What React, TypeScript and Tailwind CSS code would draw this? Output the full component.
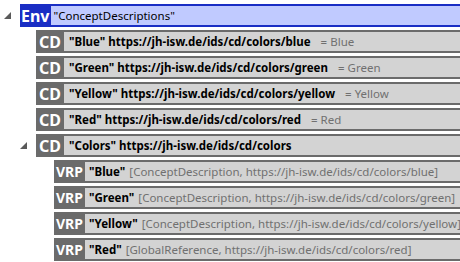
const font = { fontFamily: '"Noto Sans", "Open Sans", sans-serif' }

function Caret() {
  return (
    <svg width="7" height="7" viewBox="0 0 7 7" className="block">
      <polygon points="7,0 7,7 0,7" fill="#5a5a5a" />
    </svg>
  )
}

interface RowProps {
  indent: string
  badge: string
  kind: 'env' | 'cd' | 'vrp'
  caret?: boolean
  children: React.ReactNode
}

function Row({ indent, badge, kind, caret, children }: RowProps) {
  const isEnv = kind === 'env'
  let badgeCls = 'bg-[#6b6b6b] text-white font-bold text-[16px] leading-none px-[3px] flex items-center'
  if (kind === 'env') badgeCls = 'bg-[#1a2ec4] text-white font-bold text-[16px] leading-none px-[1px] flex items-center'
  if (kind === 'vrp') badgeCls = 'bg-[#6b6b6b] text-white font-bold text-[14px] leading-none px-[2px] flex items-center'
  return (
    <div className={`flex h-[23px] items-stretch ${indent}`}>
      <div className="w-[20px] flex items-center pl-[4px]">{caret && <Caret />}</div>
      <div className={badgeCls}>{badge}</div>
      <div
        className={
          isEnv
            ? 'flex-1 bg-[#c0caff] border-y-2 border-[#1a2ec4] flex items-center pl-[3px] whitespace-nowrap overflow-hidden text-[11.5px]'
            : kind === 'cd'
              ? 'flex-1 bg-[#d3d3d3] border-y-2 border-[#6b6b6b] flex items-center pl-[5px] whitespace-nowrap overflow-hidden text-[11.5px]'
              : 'flex-1 bg-[#d3d3d3] border-y-2 border-[#6b6b6b] flex items-center pl-[4px] whitespace-nowrap overflow-hidden text-[11.5px]'
        }
      >
        {children}
      </div>
    </div>
  )
}

const colors = ['Blue', 'Green', 'Yellow', 'Red']

export default function App() {
  return (
    <div className="w-[460px] h-[262px] bg-white overflow-hidden pt-[4px] flex flex-col gap-[3px]" style={font}>
      <Row indent="" badge="Env" kind="env" caret>
        <span className="text-black">"ConceptDescriptions"</span>
      </Row>
      {colors.map((c) => (
        <Row key={c} indent="ml-[16px]" badge="CD" kind="cd">
          <span className="font-bold text-black">
            "{c}" https://jh-isw.de/ids/cd/colors/{c.toLowerCase()}
          </span>
          <span className="ml-[10px] text-[#707070]">= {c}</span>
        </Row>
      ))}
      <Row indent="ml-[16px]" badge="CD" kind="cd" caret>
        <span className="font-bold text-black">"Colors" https://jh-isw.de/ids/cd/colors</span>
      </Row>
      {colors.map((c) => (
        <Row key={'v' + c} indent="ml-[34px]" badge="VRP" kind="vrp">
          <span className="font-bold text-black">"{c}"</span>
          <span className="ml-[4px] text-[#707070]">
            [{c === 'Red' ? 'GlobalReference' : 'ConceptDescription'}, https://jh-isw.de/ids/cd/colors/{c.toLowerCase()}]
          </span>
        </Row>
      ))}
    </div>
  )
}
